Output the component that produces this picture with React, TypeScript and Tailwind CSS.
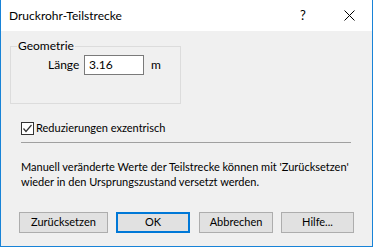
import React from "react";

const font = { fontFamily: 'Lato, "Segoe UI", sans-serif' };

function Btn({ label, w, primary }: { label: string; w: string; primary?: boolean }) {
  return (
    <div
      className={`${w} h-[21px] flex items-center justify-center bg-[#e1e1e1] text-[11px] text-black ${
        primary ? "border-2 border-[#0078d7]" : "border border-[#adadad]"
      }`}
    >
      {label}
    </div>
  );
}

export default function App() {
  return (
    <div
      className="w-[373px] h-[247px] flex flex-col bg-white border-l border-r border-b border-[#1883d7] overflow-hidden"
      style={font}
    >
      <div className="h-[31px] shrink-0 flex items-center bg-white">
        <div className="pl-[8px] text-[12px] text-black flex-1 leading-none">Druckrohr-Teilstrecke</div>
        <div className="w-[46px] flex justify-center text-[13px] text-black leading-none">?</div>
        <div className="w-[46px] flex justify-center">
          <svg width="11" height="11" viewBox="0 0 11 11">
            <path d="M0.5 0.5 L10.5 10.5 M10.5 0.5 L0.5 10.5" stroke="#000" strokeWidth="1" />
          </svg>
        </div>
      </div>
      <div className="flex-1 bg-[#f0f0f0] flex flex-col text-[11px] text-black">
        <fieldset className="mt-[7px] ml-[9px] w-[171px] h-[66px] border border-[#dcdcdc] m-0 p-0">
          <legend className="ml-[6px] px-[1px] leading-[16px] text-[12px]">Geometrie</legend>
          <div className="mt-[1px] flex items-center">
            <span className="pl-[37px] w-[73px] text-[12px]">Länge</span>
            <div className="w-[60px] h-[20px] border border-[#7a7a7a] bg-white flex items-center pl-[4px] text-[12px]">3.16</div>
            <span className="ml-[7px] text-[12px]">m</span>
          </div>
        </fieldset>
        <div className="mt-[16px] ml-[20px] h-[16px] flex items-center">
          <div className="w-[13px] h-[13px] border border-[#333] bg-white flex items-center justify-center">
            <svg width="11" height="11" viewBox="0 0 11 11">
              <path d="M1.5 5.5 L4 8.5 L9.5 2" stroke="#333" strokeWidth="1.2" fill="none" />
            </svg>
          </div>
          <span className="ml-[2px] text-[11px]">Reduzierungen exzentrisch</span>
        </div>
        <div className="mt-[6px] ml-[20px] w-[330px] h-[1px] bg-[#a0a0a0]" />
        <div className="mt-[16px] ml-[20px] leading-[15px] whitespace-nowrap">
          <div>Manuell veränderte Werte der Teilstrecke können mit 'Zurücksetzen'</div>
          <div>wieder in den Ursprungszustand versetzt werden.</div>
        </div>
        <div className="mt-[23px] ml-[18px] flex">
          <Btn label="Zurücksetzen" w="w-[89px]" />
          <div className="ml-[8px]">
            <Btn label="OK" w="w-[74px]" primary />
          </div>
          <div className="ml-[9px]">
            <Btn label="Abbrechen" w="w-[74px]" />
          </div>
          <div className="ml-[8px]">
            <Btn label="Hilfe..." w="w-[73px]" />
          </div>
        </div>
      </div>
    </div>
  );
}
